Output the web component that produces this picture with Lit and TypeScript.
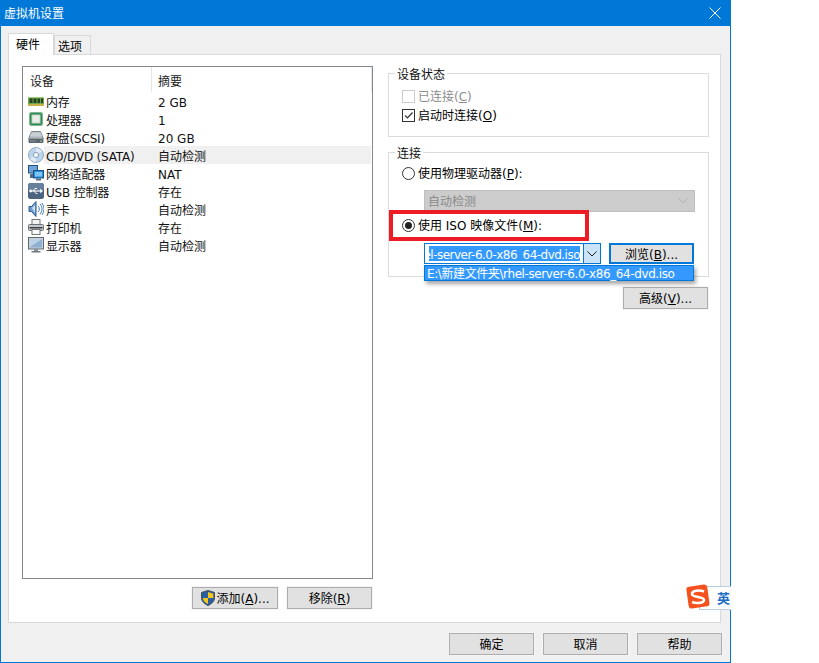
import { LitElement, html, css, svg } from "lit";
import { customElement } from "lit/decorators.js";

const icons: Record<string, unknown> = {
  mem: svg`<rect x="0" y="4" width="16" height="8" fill="#6fa84f"/><rect x="0" y="4" width="16" height="1" fill="#9ccf78"/><rect x="1.500" y="5.500" width="3" height="4.500" fill="#27401f"/><rect x="5.500" y="5.500" width="3" height="4.500" fill="#27401f"/><rect x="9.500" y="5.500" width="2.500" height="4.500" fill="#27401f"/><rect x="13" y="5.500" width="2" height="4.500" fill="#27401f"/><rect x="0" y="11" width="16" height="2" fill="#c7b04a"/>`,
  cpu: svg`<rect x="2" y="2" width="12" height="12" rx="1" fill="#2e8b57"/><rect x="1.500" y="1.500" width="13" height="13" rx="1" fill="none" stroke="#7fb88f"/><rect x="4" y="4" width="8" height="8" fill="#e9eee6" stroke="#c8d2c4"/>`,
  hdd: svg`<path d="M3.500 2.500h9l3 7.500H.5z" fill="#aeb6bd" stroke="#7c858d"/><path d="M3.500 3.500h9l1.500 4H2z" fill="#c9d0d6"/><rect x="0.500" y="10" width="15" height="4" rx="1" fill="#5d666e"/><rect x="12" y="11.500" width="2" height="1" fill="#7fe07f"/><rect x="2" y="11.500" width="6" height="1" fill="#8a939b"/>`,
  cd: svg`<circle cx="8" cy="8" r="7.500" fill="#bcd4ec" stroke="#93a9c0"/><path d="M8 1a7 7 0 0 1 6 3.500L8 8z" fill="#dfeaf6"/><path d="M8 15a7 7 0 0 1-6-3.500L8 8z" fill="#dfeaf6"/><circle cx="8" cy="8" r="2.600" fill="#eef4fa" stroke="#8da3ba"/><circle cx="8" cy="8" r="1" fill="#fff"/>`,
  net: svg`<rect x="0.500" y="0.500" width="9" height="7.500" fill="#6fa4d8" stroke="#24507f"/><rect x="2" y="9" width="3" height="4" fill="#4f6d8a"/><rect x="5.500" y="5.500" width="10" height="7.500" fill="#1f8fe0" stroke="#24507f"/><rect x="7" y="7" width="7" height="4.500" fill="#7cc5f5"/><rect x="8" y="13.500" width="5" height="2" fill="#5a6f85"/>`,
  usb: svg`<rect x="0" y="0" width="16" height="16" rx="2.500" fill="#4c6480"/><rect x="0" y="0" width="16" height="7" rx="2.500" fill="#68809b"/><path d="M2 8h10.500" stroke="#fff" stroke-width="1.200"/><path d="M12.200 5.800L15 8l-2.800 2.200z" fill="#fff"/><circle cx="2.600" cy="8" r="1.400" fill="#fff"/><path d="M5 8l2-2.500h2M6 8l2 2.500h1.500" stroke="#fff" fill="none"/>`,
  snd: svg`<path d="M1 5.500h2.500L8 .5v15L3.500 10.500H1z" fill="#6d9bd0" stroke="#2e5a8f"/><path d="M4 7l3-3v8z" fill="#cfe2f5"/><path d="M10 5a4 4 0 0 1 0 6M12 3a7 7 0 0 1 0 10M13.800 2a9 9 0 0 1 0 12" stroke="#4a7db5" fill="none"/>`,
  prn: svg`<rect x="4" y="0.500" width="8" height="5" fill="#f4f4f4" stroke="#777"/><rect x="0.500" y="5.500" width="15" height="6" rx="1" fill="#c4c8cc" stroke="#6c7278"/><rect x="1.500" y="8" width="13" height="1.500" fill="#3e4347"/><rect x="4" y="10.500" width="8" height="5" fill="#fafafa" stroke="#777"/>`,
  mon: svg`<rect x="0.500" y="0.500" width="15" height="11.500" fill="#cdd3d9" stroke="#5f6870"/><rect x="2" y="2" width="12" height="8.500" fill="#8fb0cf"/><path d="M2 2h12L2 10z" fill="#bcd2e6"/><rect x="6" y="12" width="4" height="2" fill="#8a9299"/><rect x="3.500" y="14" width="9" height="1.500" fill="#6f777e"/>`,
};

const rows = [
  ["mem", "内存", "2 GB"],
  ["cpu", "处理器", "1"],
  ["hdd", "硬盘(SCSI)", "20 GB"],
  ["cd", "CD/DVD (SATA)", "自动检测"],
  ["net", "网络适配器", "NAT"],
  ["usb", "USB 控制器", "存在"],
  ["snd", "声卡", "自动检测"],
  ["prn", "打印机", "存在"],
  ["mon", "显示器", "自动检测"],
];

@customElement("app-root")
export class AppRoot extends LitElement {
  static styles = css`
    :host {
      display: block;
      position: relative;
      width: 819px;
      height: 663px;
      background: #fff;
      overflow: hidden;
      font: 12px/16px "DejaVu Sans", "Noto Sans CJK SC", sans-serif;
      color: #000;
    }
    * { box-sizing: border-box; }
    .window {
      width: 731px;
      height: 663px;
      border: 1px solid #0078d7;
      border-top: 0;
      background: #f0f0f0;
      display: flex;
      flex-direction: column;
    }
    .title {
      height: 26px;
      margin: 0 -1px;
      background: #0078d7;
      color: #fff;
      display: flex;
      align-items: center;
      justify-content: space-between;
      padding: 0 10px 0 4px;
    }
    .title span { padding-top: 2px; }
    .title svg { display: block; }
    .tabs { display: flex; align-items: flex-end; height: 21px; margin: 7px 0 0 7px; }
    .tab {
      height: 19px;
      width: 37px;
      background: #f0f0f0;
      border: 1px solid #d9d9d9;
      border-bottom: 0;
      padding-left: 3px;
      line-height: 22px;
    }
    .tab.on {
      height: 22px;
      width: 46px;
      margin-bottom: -1px;
      background: #fff;
      position: relative;
      z-index: 1;
      padding-left: 7px;
      line-height: 22px;
    }
    .panel {
      height: 569px;
      margin: 0 9px 0 7px;
      background: #fff;
      border: 1px solid #d9d9d9;
      padding: 11px 0 0 13px;
      display: flex;
      gap: 15px;
    }
    .left { width: 351px; }
    .list { height: 513px; border: 1px solid #828790; background: #fff; }
    .head { display: flex; height: 25px; }
    .head div { line-height: 30px; padding-left: 6px; color: #222; }
    .head .c1 { width: 129px; border-right: 1px solid #e5e5e5; padding-left: 7px; }
    .head .c2 { flex: 1; border-right: 1px solid #e5e5e5; }
    .row { display: flex; height: 18px; line-height: 22px; color: #111; }
    .icon { width: 21px; padding: 1px 0 0 5px; flex: none; }
    .icon svg { display: block; }
    .cell { display: flex; flex: 1; }
    .row.sel .cell { background: #f0f0f0; margin-right: 1px; }
    .name { width: 108px; padding-left: 2px; white-space: nowrap; letter-spacing: -0.2px; }
    .val { padding-left: 6px; }
    .btns { display: flex; justify-content: flex-end; gap: 9px; margin: 8px 1px 0 0; }
    button {
      font: inherit;
      color: #000;
      width: 85px;
      height: 22px;
      padding: 2px 0 0;
      background: #e1e1e1;
      border: 1px solid #adadad;
      display: flex;
      align-items: center;
      justify-content: center;
      white-space: pre;
      box-shadow: 0 0 0 1px #f5f5f5;
    }
    button.add { width: 86px; padding-top: 0; }
    button.add svg { flex: none; }
    button.add span { padding-top: 2px; }
    button.focus { border: 2px solid #0078d7; box-shadow: none; }
    .right { width: 321px; }
    fieldset {
      margin: 0;
      padding: 0 13px;
      border: 1px solid #dcdcdc;
      min-width: 0;
    }
    legend { padding: 0 2px; margin-left: -7px; line-height: 20px; height: 16px; color: #111; }
    .g1 { height: 72px; margin-top: -1px; }
    .g2 { height: 133px; margin-top: 7px; }
    .opt { display: flex; align-items: center; height: 18px; gap: 3px; white-space: nowrap; }
    .opt > span { padding-top: 2px; }
    .g1 .opt:first-of-type { margin-top: 6px; }
    .opt + .opt { margin-top: 1px; }
    .opt.dis { color: #8d8d8d; }
    .box { width: 13px; height: 13px; border: 1px solid #333; background: #fff; flex: none; }
    .dis .box { border-color: #cccccc; }
    .box svg, .radio svg { display: block; }
    .radio { width: 13px; height: 13px; flex: none; }
    .g2 .r1 { margin-top: 4px; }
    .sel-dis {
      margin: 8px 0 0 22px;
      width: 271px;
      height: 22px;
      background: #cccccc;
      border: 1px solid #bfbfbf;
      color: #8a8a8a;
      display: flex;
      align-items: center;
      justify-content: space-between;
      padding: 0 6px 0 3px;
    }
    .sel-dis span { padding-top: 2px; }
    .iso { position: relative; margin-top: 4px; }
    .red {
      position: absolute;
      left: -13px;
      top: -6px;
      width: 200px;
      height: 31px;
      border: 4px solid #ed1c24;
    }
    .combo-row { position: relative; margin: 9px 0 0 22px; display: flex; gap: 8px; }
    .combo {
      width: 177px;
      height: 21px;
      border: 1px solid #0078d7;
      background: #fff;
      display: flex;
    }
    .txt { flex: 1; min-width: 0; padding: 2px 3px 2px 4px; display: flex; }
    .clip { flex: 1; min-width: 0; overflow: hidden; display: flex; justify-content: flex-end; }
    .clip span { background: #3399ff; color: #fff; white-space: nowrap; line-height: 18px; height: 15px; letter-spacing: -0.52px; flex: none; }
    .arrow {
      width: 17px;
      background: #cce4f7;
      border-left: 1px solid #0078d7;
      display: flex;
      align-items: center;
      justify-content: center;
    }
    .combo-row button { height: 21px; }
    .drop {
      position: absolute;
      left: 0;
      top: 22px;
      width: 270px;
      height: 16px;
      background: #3399ff;
      border: 1px solid #0078d7;
      color: #fff;
      padding-left: 2px;
      line-height: 16px;
      white-space: nowrap;
      letter-spacing: -0.4px;
      box-shadow: 2px 3px 4px rgba(0, 0, 0, 0.35);
    }
    .adv { display: flex; justify-content: flex-end; margin: 10px 1px 0 0; }
    .foot { display: flex; justify-content: flex-end; gap: 9px; margin: 10px 8px 0 0; }
    .ime {
      position: absolute;
      left: 685px;
      top: 583px;
      width: 46px;
      height: 28px;
    }
    .ime .bar {
      position: absolute;
      left: 14px;
      top: 3px;
      right: 0;
      height: 24px;
      background: #fff;
      border: 1px solid #b9cde3;
      border-right: 0;
      color: #1e6fc4;
      font-weight: 700;
      font-size: 13px;
      line-height: 22px;
      padding-left: 17px;
      font-family: "Noto Sans CJK SC", sans-serif;
      white-space: nowrap;
      overflow: hidden;
    }
    .ime svg { position: absolute; left: 0; top: 0; }
  `;

  render() {
    return html`
      <div class="window">
        <div class="title">
          <span>虚拟机设置</span>
          <svg width="12" height="12" viewBox="0 0 12 12"><path d="M.5.5l11 11M11.500.5l-11 11" stroke="#fff" fill="none"/></svg>
        </div>
        <div class="tabs">
          <div class="tab on">硬件</div>
          <div class="tab">选项</div>
        </div>
        <div class="panel">
          <div class="left">
            <div class="list">
              <div class="head"><div class="c1">设备</div><div class="c2">摘要</div></div>
              ${rows.map(
                ([ic, n, v]) => html`<div class="row ${ic === "cd" ? "sel" : ""}">
                  <div class="icon"><svg width="16" height="16" viewBox="0 0 16 16">${icons[ic]}</svg></div>
                  <div class="cell"><div class="name">${n}</div><div class="val">${v}</div></div>
                </div>`
              )}
            </div>
            <div class="btns">
              <button class="add">
                <svg width="16" height="16" viewBox="0 0 16 16"><path d="M8 .5l6.500 2v5c0 4-3 6.500-6.500 8-3.500-1.500-6.500-4-6.500-8v-5z" fill="#2a5f9e" stroke="#3d4a57"/><path d="M8 2v6h5.300v-4.300zM8 8v6c-2.500-1-5-3-5.200-6z" fill="#f8c51c"/></svg>
                <span>添加(<u>A</u>)...</span>
              </button>
              <button><span>移除(<u>R</u>)</span></button>
            </div>
          </div>
          <div class="right">
            <fieldset class="g1">
              <legend>设备状态</legend>
              <div class="opt dis"><div class="box"></div><span>已连接(<u>C</u>)</span></div>
              <div class="opt">
                <div class="box"><svg width="11" height="11" viewBox="0 0 11 11"><path d="M2 5.500l2.500 2.500L9.500 2.500" stroke="#333" fill="none" stroke-width="1.200"/></svg></div>
                <span>启动时连接(<u>O</u>)</span>
              </div>
            </fieldset>
            <fieldset class="g2">
              <legend>连接</legend>
              <div class="opt r1">
                <div class="radio"><svg width="13" height="13" viewBox="0 0 13 13"><circle cx="6.500" cy="6.500" r="6" fill="#fff" stroke="#333"/></svg></div>
                <span>使用物理驱动器(<u>P</u>):</span>
              </div>
              <div class="sel-dis">
                <span>自动检测</span>
                <svg width="10" height="6" viewBox="0 0 10 6"><path d="M.5.500L5 5 9.500.5" stroke="#b0b0b0" fill="none"/></svg>
              </div>
              <div class="opt iso">
                <div class="radio"><svg width="13" height="13" viewBox="0 0 13 13"><circle cx="6.500" cy="6.500" r="6" fill="#fff" stroke="#333"/><circle cx="6.500" cy="6.500" r="3.500" fill="#222"/></svg></div>
                <span>使用 ISO 映像文件(<u>M</u>):</span>
                <div class="red"></div>
              </div>
              <div class="combo-row">
                <div class="combo">
                  <div class="txt"><div class="clip"><span>rhel-server-6.0-x86_64-dvd.iso</span></div></div>
                  <div class="arrow"><svg width="10" height="6" viewBox="0 0 10 6"><path d="M.5.500L5 5 9.500.5" stroke="#222" fill="none"/></svg></div>
                </div>
                <button class="focus"><span>浏览(<u>B</u>)...</span></button>
                <div class="drop">E:\\新建文件夹\\rhel-server-6.0-x86_64-dvd.iso</div>
              </div>
            </fieldset>
            <div class="adv"><button><span>高级(<u>V</u>)...</span></button></div>
          </div>
        </div>
        <div class="foot">
          <button>确定</button>
          <button>取消</button>
          <button>帮助</button>
        </div>
      </div>
      <div class="ime">
        <div class="bar">英</div>
        <svg width="26" height="28" viewBox="0 0 26 28">
          <rect x="2.500" y="2.500" width="21" height="22" rx="3" fill="#f4511e" transform="rotate(-8 13 14)"/>
          <path d="M19 8.500c-4-1.500-12-1.500-12 2.500 0 4 12 2 12 6 0 3.500-8 3.500-12 2" stroke="#fff" stroke-width="2.600" fill="none"/>
        </svg>
      </div>
    `;
  }
}
